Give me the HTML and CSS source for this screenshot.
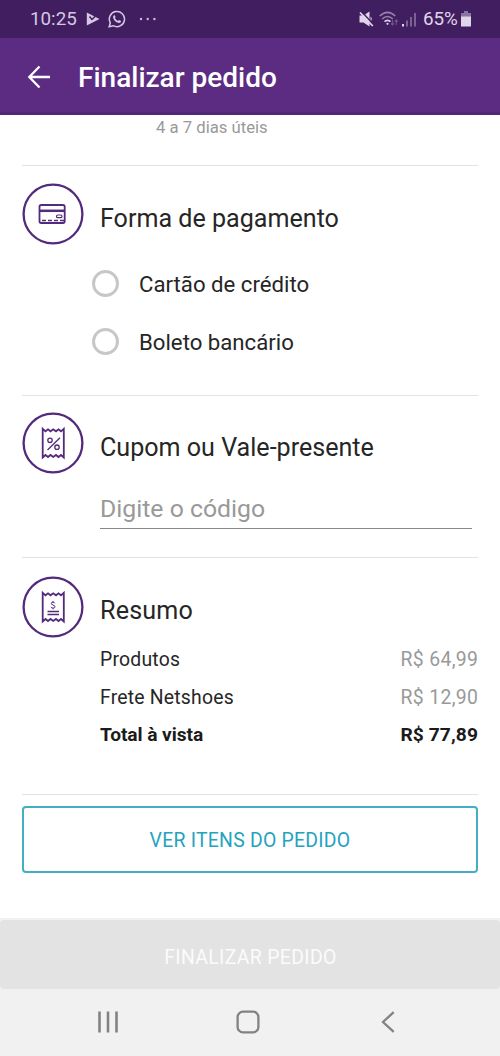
FILE: index.html
```html
<!DOCTYPE html>
<html lang="pt-BR">
<head>
<meta charset="utf-8">
<title>Finalizar pedido</title>
<link rel="stylesheet" href="styles.css">
</head>
<body>
<div class="screen">
  <div class="status">
    <span class="clock">10:25</span>
    <svg class="st-play" width="14" height="16" viewBox="0 0 14 16"><path d="M.800 1.500 L13.500 8 L.800 14.500 Z" fill="#d6c8e4"/><path d="M3.500 5.500 L6 8.500 L12 2.500" fill="none" stroke="#401e60" stroke-width="1.500"/><path d="M7 4.500 L11 1.800" stroke="#401e60" stroke-width="1"/></svg>
    <svg class="st-chat" width="18" height="18" viewBox="0 0 18 18"><path d="M1.200 16.800 L2.300 12.800 A7.600 7.600 0 1 1 5.200 15.700 Z" fill="none" stroke="#d6c8e4" stroke-width="1.500"/><path d="M6.500 4.900 L7.600 7.100 L6.900 8.100 Q8 10.100 10 10.900 L11 9.900 L13.200 11 Q12.900 13.100 10.900 13 Q5.800 12 5 7 Q5.200 5.300 6.500 4.900 Z" fill="#d6c8e4"/></svg>
    <svg class="st-dots" width="18" height="4" viewBox="0 0 18 4" fill="#cbbada"><circle cx="2" cy="2" r="1.200"/><circle cx="8.700" cy="2" r="1.200"/><circle cx="15.400" cy="2" r="1.200"/></svg>
    <svg class="st-mute" width="15" height="16" viewBox="0 0 15 16"><path d="M.500 4.500 H4.500 L10.500 .500 V15.500 L4.500 11.500 H.500 Z" fill="#e0d5e9"/><path d="M11.500 5.500 Q14 8 11.500 10.500 Z" fill="#e0d5e9"/><path d="M2.500 .500 L14.800 13.800" stroke="#401e60" stroke-width="1.500"/><path d="M1 1.500 L13.800 15" stroke="#e0d5e9" stroke-width="1.800"/></svg>
    <svg class="st-wifi" width="20" height="16" viewBox="0 0 20 16" fill="none" stroke="#9a82ad" stroke-width="1.600"><path d="M.800 5 Q8.500 -2.200 16.200 5"/><path d="M3.200 8 Q8.500 3 13.800 8"/><path d="M5.500 10.700 Q8.500 8 11.500 10.700" stroke="#e0d5e9"/><circle cx="8.500" cy="12.800" r="1.100" fill="#e0d5e9" stroke="none"/><path d="M13.500 9 V14 M11.900 12.300 L13.500 14 L15.100 12.300 M17.300 14 V9 M15.700 10.700 L17.300 9 L18.900 10.700" stroke="#705389" stroke-width="1.200"/></svg>
    <svg class="st-signal" width="15" height="16" viewBox="0 0 15 16" fill="#7c6294"><rect x="0" y="13" width="2" height="2.500" fill="#e0d5e9"/><rect x="4" y="9.500" width="2" height="6"/><rect x="8" y="6" width="2" height="9.500"/><rect x="12" y="2" width="2" height="13.500"/></svg>
    <span class="percent">65%</span>
    <svg class="st-battery" width="10" height="16" viewBox="0 0 10 16"><path d="M3 0 H7 V2 H10 V6 H0 V2 H3 Z" fill="#8b74a0"/><path d="M0 5.500 H10 V15 Q10 15.500 9.500 15.500 H.500 Q0 15.500 0 15 Z" fill="#e0d5e9"/></svg>
  </div>
  <header class="appbar">
    <svg class="back" width="24" height="24" viewBox="0 0 24 24" fill="none" stroke="#fff" stroke-width="2.300"><path d="M12.500 1.500 L2.300 12 L12.500 22.500 M2.300 12 H23"/></svg>
    <h1 class="appbar-title">Finalizar pedido</h1>
  </header>
  <main class="content">
    <section class="section delivery"><p class="delivery-time">4 a 7 dias úteis</p></section>
    <section class="section payment">
      <div class="heading">
        <svg class="badge" width="62" height="62" viewBox="0 0 62 62" fill="none" stroke="#532a7c"><circle cx="31" cy="31" r="29.400" stroke-width="2.300"/><rect x="17.500" y="22" width="25.200" height="18" rx="1.700" stroke-width="1.800"/><path d="M17.500 27.800 H42.800" stroke-width="2.500"/><rect x="34.500" y="32" width="5.500" height="2.700" rx="1.300" stroke-width="1.200"/><path d="M20 37.500 H42" stroke-width="1.300" stroke-dasharray="4 2"/></svg>
        <h2 class="heading-text">Forma de pagamento</h2>
      </div>
      <label class="option"><span class="radio"></span><span>Cartão de crédito</span></label>
      <label class="option"><span class="radio"></span><span>Boleto bancário</span></label>
    </section>
    <section class="section coupon">
      <div class="heading">
        <svg class="badge" width="62" height="62" viewBox="0 0 62 62" fill="none" stroke="#532a7c"><circle cx="31" cy="31" r="29.400" stroke-width="2.300"/><path d="M20.700 45.500 V16.800 L23.500 19.300 L26 17.300 L28.500 19.300 L31.200 17.300 L34 19.300 L36.500 17.300 L39 19.300 L41.800 16.800 V45.500 L39 43 L36.500 45 L34 43 L31.200 45 L28.500 43 L26 45 L23.500 43 Z" stroke-width="1.800"/><circle cx="28" cy="28.300" r="2.200" stroke-width="1.300"/><circle cx="35" cy="35.200" r="2.200" stroke-width="1.300"/><path d="M38 25.800 L25.500 38" stroke-width="1.300"/></svg>
        <h2 class="heading-text">Cupom ou Vale-presente</h2>
      </div>
      <div class="field">Digite o código</div>
    </section>
    <section class="section summary">
      <div class="heading">
        <svg class="badge" width="62" height="62" viewBox="0 0 62 62" fill="none" stroke="#532a7c"><circle cx="31" cy="31" r="29.400" stroke-width="2.300"/><path d="M20.700 45.500 V16.800 L23.500 19.300 L26 17.300 L28.500 19.300 L31.200 17.300 L34 19.300 L36.500 17.300 L39 19.300 L41.800 16.800 V45.500 L39 43 L36.500 45 L34 43 L31.200 45 L28.500 43 L26 45 L23.500 43 Z" stroke-width="1.800"/><path d="M32.800 27.300 Q32.500 26.200 31 26.200 Q29.300 26.200 29.300 27.500 Q29.300 28.600 31 29 Q33 29.500 33 30.800 Q33 32.100 31.100 32.100 Q29.300 32.100 29 30.800 M31 25 V26.200 M31 32.100 V33.300" stroke-width="1"/><path d="M25.500 35.500 H37 M25.500 38.500 H37" stroke-width="1.300"/></svg>
        <h2 class="heading-text resumo">Resumo</h2>
      </div>
      <div class="row"><span>Produtos</span><span class="price">R$ 64,99</span></div>
      <div class="row"><span>Frete Netshoes</span><span class="price">R$ 12,90</span></div>
      <div class="row total"><span>Total à vista</span><span class="price">R$ 77,89</span></div>
    </section>
    <button class="items">VER ITENS DO PEDIDO</button>
  </main>
  <div class="finish-area"><button class="finish">FINALIZAR PEDIDO</button></div>
  <nav class="navbar">
    <svg width="22" height="22" viewBox="0 0 22 22" stroke="#828282" stroke-width="2.600"><path d="M2.500 .500 V21.500 M11 .500 V21.500 M19.500 .500 V21.500"/></svg>
    <svg width="24" height="24" viewBox="0 0 24 24" fill="none" stroke="#828282" stroke-width="2.300"><rect x="1.600" y="1.600" width="20.800" height="20.800" rx="5.500"/></svg>
    <svg width="14" height="22" viewBox="0 0 14 22" fill="none" stroke="#828282" stroke-width="2.300"><path d="M12.700 1.200 L2 11 L12.700 20.800"/></svg>
  </nav>
</div>
</body>
</html>
```

FILE: styles.css
```css
* { box-sizing: border-box; }
body { margin: 0; background: #fff; font-family: Roboto, "Liberation Sans", sans-serif; color: #262626; }
h1, h2, p { margin: 0; font-weight: 400; }
svg { display: block; flex: none; }
button { font-family: inherit; font-weight: 400; padding: 0; }
.screen { width: 500px; height: 1056px; display: flex; flex-direction: column; overflow: hidden; }
.status { height: 38px; flex: none; background: #401e60; color: #d6c8e4; display: flex; align-items: center; padding: 0 29px 0 30px; font-size: 18.8px; white-space: nowrap; }
.clock { width: 56px; }
.st-chat { margin-left: 8px; }
.st-dots { margin-left: 13px; }
.st-mute { margin-left: auto; }
.st-wifi { margin-left: 5px; }
.st-signal { margin-left: 3px; }
.percent { margin-left: 6px; width: 38px; color: #e0d5e9; font-size: 18.8px; }
.appbar { height: 77px; flex: none; background: #5b2c82; border-bottom: 3px solid #51277a; color: #fff; display: flex; align-items: center; padding: 3px 0 0 27px; }
.appbar-title { margin-left: 27px; font-size: 28px; font-weight: 500; line-height: 36px; padding-top: 2px; }
.content { flex: 1; padding: 0 22px; }
.section { border-bottom: 1px solid #e2e2e2; }
.delivery { height: 51px; }
.delivery-time { padding-left: 134px; font-size: 16.7px; line-height: 25px; color: #999; }
.heading { display: flex; height: 62px; gap: 16px; }
.heading-text { font-size: 25.1px; line-height: 30px; padding-top: 21px; white-space: nowrap; }
.heading-text.resumo { padding-top: 20px; letter-spacing: .2px; }
.payment { height: 230px; padding-top: 17px; }
.option { display: flex; align-items: center; height: 58px; padding-left: 70px; font-size: 22.2px; }
.heading + .option { margin-top: 10px; }
.radio { width: 27px; height: 27px; border: 3px solid #c7c7c7; border-radius: 50%; margin: -1px 20px 0 0; }
.coupon { height: 162px; padding-top: 16px; }
.field { margin: 17px 6px 0 78px; height: 38px; border-bottom: 1px solid #888; font-size: 24.8px; line-height: 36px; color: #999; }
.summary { height: 237px; padding-top: 18px; }
.row { display: flex; justify-content: space-between; padding-left: 78px; height: 37.5px; line-height: 37.5px; font-size: 19.4px; letter-spacing: .2px; }
.heading + .row { margin-top: 3px; }
.price { color: #999; letter-spacing: .35px; margin-right: -.35px; }
.total { font-weight: 700; font-size: 19.2px; letter-spacing: -.08px; color: #1b1b1b; }
.total .price { color: #1b1b1b; letter-spacing: .1px; margin-right: 0; }
.items { display: block; width: 456px; height: 67px; margin-top: 11px; border: 2px solid #43aec8; border-radius: 4px; background: #fff; color: #24a3bf; font-size: 19.4px; letter-spacing: .25px; padding-top: 2px; }
.finish-area { height: 71px; flex: none; background: #f1f1f1; padding-top: 2px; }
.finish { display: block; width: 500px; height: 69px; background: #e3e3e3; border: 0; border-radius: 4px; color: #fbfbfb; font-size: 19.4px; letter-spacing: .35px; padding: 5px 0 0 1px; }
.navbar { height: 67px; flex: none; background: #f1f1f1; display: flex; align-items: center; justify-content: space-between; padding: 0 105px 2px 97px; }
.navbar svg:nth-child(2) { margin-right: 5px; }
```
